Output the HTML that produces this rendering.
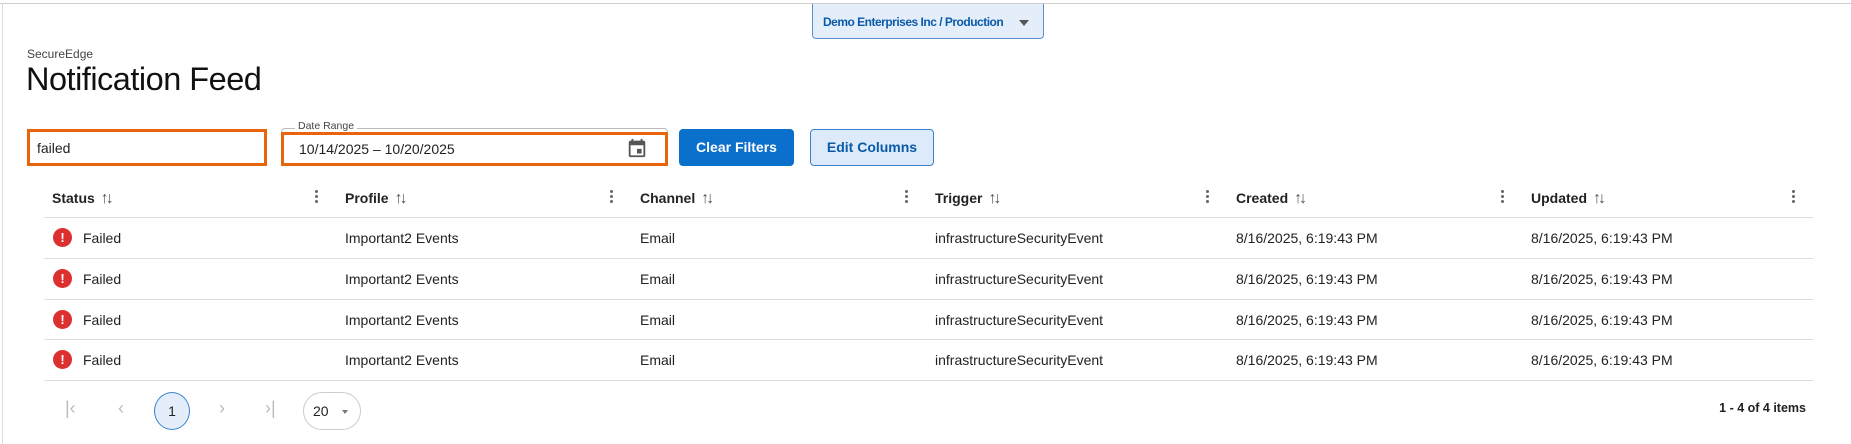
<!DOCTYPE html>
<html><head><meta charset="utf-8"><style>
*{box-sizing:border-box;margin:0;padding:0}
body{width:1851px;height:444px;background:#fff;font-family:"Liberation Sans",sans-serif;color:#222;position:relative;overflow:hidden}
.abs{position:absolute}
.topline{left:0;top:3px;width:1851px;height:1px;background:#ccc}
.leftline{left:2px;top:3px;width:1px;height:441px;background:#ddd}
.tenant{left:812px;top:4px;width:232px;height:35px;background:#e3eefa;border:1px solid #5b8fc9;border-top:none;border-radius:0 0 4px 4px;color:#0b5aa8;font-weight:bold;font-size:12px;padding:11px 0 0 10px;letter-spacing:-0.5px}
.tenant .tri{position:absolute;right:14px;top:16px;width:0;height:0;border-left:5px solid transparent;border-right:5px solid transparent;border-top:6px solid #555}
.brand{left:27px;top:47px;font-size:12px;color:#444}
.title{left:26px;top:61px;font-size:32.5px;color:#111;letter-spacing:-0.5px}
.search{left:27px;top:129px;width:240px;height:37px;border:3px solid #e8650c;font-size:14px;padding:8px 0 0 7px}
.date{left:281px;top:128px;width:387px;height:38px;border:1px solid #bbb;border-radius:4px}
.dateo{left:281px;top:132px;width:387px;height:34px;border:3px solid #e8650c;font-size:14px;padding:6px 0 0 15px}
.dlabel{left:295px;top:120px;font-size:10.5px;color:#444;background:#fff;padding:0 3px}
.btn{height:37px;top:129px;border-radius:4px;font-size:14px;font-weight:bold;text-align:center;line-height:35px}
.clear{left:679px;width:115px;background:#0b6fcc;color:#fff;border:1px solid #0b6fcc}
.edit{left:810px;width:124px;background:#dceafa;color:#0b5aa8;border:1px solid #3d82cf}
.th{top:190px;font-size:14px;font-weight:bold;color:#222}
.sort{font-weight:normal;color:#555;margin-left:6px;letter-spacing:-3px;font-size:16px}
.keb{top:190px;width:4px}
.keb i{display:block;width:3px;height:3px;border-radius:50%;background:#666;margin-bottom:2px}
.hl{left:44px;width:1769px;height:1px;background:#ddd}
.td{font-size:14px;color:#222}
.ico{width:19px;height:19px;border-radius:50%;background:#dc2f2f;color:#fff;font-weight:bold;font-size:13px;text-align:center;line-height:19px}
.pg{top:398px;font-size:18px;color:#bbb}
.cur{left:154px;top:392px;width:36px;height:38px;border-radius:50%;border:1px solid #3d82cf;background:#e3eefa;color:#222;text-align:center;line-height:36px;font-size:14px}
.sel{left:303px;top:392px;width:58px;height:38px;border-radius:19px;border:1px solid #ccc;font-size:14px;padding:10px 0 0 9px}
.sel .tri{position:absolute;right:12px;top:17px;border-left:3px solid transparent;border-right:3px solid transparent;border-top:4px solid #777}
.items{right:45px;top:401px;font-size:12.5px;font-weight:bold;color:#222}
</style></head><body>
<div class="abs topline"></div><div class="abs leftline"></div>
<div class="abs tenant">Demo Enterprises Inc / Production<span class="tri"></span></div>
<div class="abs brand">SecureEdge</div>
<div class="abs title">Notification Feed</div>
<div class="abs search">failed</div>
<div class="abs date"></div>
<div class="abs dateo">10/14/2025 – 10/20/2025</div>
<div class="abs dlabel">Date Range</div>
<svg class="abs" style="left:626px;top:137px" width="22" height="22" viewBox="0 0 24 24"><path fill="#555" d="M19 4h-1V2h-2v2H8V2H6v2H5c-1.1 0-2 .9-2 2v14c0 1.1.9 2 2 2h14c1.1 0 2-.9 2-2V6c0-1.1-.9-2-2-2zm0 16H5V9h14v11zm-7-7h5v5h-5z"/></svg>
<div class="abs btn clear">Clear Filters</div>
<div class="abs btn edit">Edit Columns</div>

<div class="abs th" style="left:52px">Status<span class="sort">↑↓</span></div>
<div class="abs th" style="left:345px">Profile<span class="sort">↑↓</span></div>
<div class="abs th" style="left:640px">Channel<span class="sort">↑↓</span></div>
<div class="abs th" style="left:935px">Trigger<span class="sort">↑↓</span></div>
<div class="abs th" style="left:1236px">Created<span class="sort">↑↓</span></div>
<div class="abs th" style="left:1531px">Updated<span class="sort">↑↓</span></div>
<div class="abs keb" style="left:315px"><i></i><i></i><i></i></div>
<div class="abs keb" style="left:610px"><i></i><i></i><i></i></div>
<div class="abs keb" style="left:905px"><i></i><i></i><i></i></div>
<div class="abs keb" style="left:1206px"><i></i><i></i><i></i></div>
<div class="abs keb" style="left:1501px"><i></i><i></i><i></i></div>
<div class="abs keb" style="left:1792px"><i></i><i></i><i></i></div>

<div class="abs hl" style="top:217px"></div>
<div class="abs hl" style="top:258px"></div>
<div class="abs hl" style="top:299px"></div>
<div class="abs hl" style="top:339px"></div>
<div class="abs hl" style="top:380px"></div>

<div class="abs ico" style="left:53px;top:228px">!</div>
<div class="abs td" style="left:83px;top:230px">Failed</div>
<div class="abs td" style="left:345px;top:230px">Important2 Events</div>
<div class="abs td" style="left:640px;top:230px">Email</div>
<div class="abs td" style="left:935px;top:230px">infrastructureSecurityEvent</div>
<div class="abs td" style="left:1236px;top:230px">8/16/2025, 6:19:43 PM</div>
<div class="abs td" style="left:1531px;top:230px">8/16/2025, 6:19:43 PM</div>

<div class="abs ico" style="left:53px;top:269px">!</div>
<div class="abs td" style="left:83px;top:271px">Failed</div>
<div class="abs td" style="left:345px;top:271px">Important2 Events</div>
<div class="abs td" style="left:640px;top:271px">Email</div>
<div class="abs td" style="left:935px;top:271px">infrastructureSecurityEvent</div>
<div class="abs td" style="left:1236px;top:271px">8/16/2025, 6:19:43 PM</div>
<div class="abs td" style="left:1531px;top:271px">8/16/2025, 6:19:43 PM</div>

<div class="abs ico" style="left:53px;top:310px">!</div>
<div class="abs td" style="left:83px;top:312px">Failed</div>
<div class="abs td" style="left:345px;top:312px">Important2 Events</div>
<div class="abs td" style="left:640px;top:312px">Email</div>
<div class="abs td" style="left:935px;top:312px">infrastructureSecurityEvent</div>
<div class="abs td" style="left:1236px;top:312px">8/16/2025, 6:19:43 PM</div>
<div class="abs td" style="left:1531px;top:312px">8/16/2025, 6:19:43 PM</div>

<div class="abs ico" style="left:53px;top:350px">!</div>
<div class="abs td" style="left:83px;top:352px">Failed</div>
<div class="abs td" style="left:345px;top:352px">Important2 Events</div>
<div class="abs td" style="left:640px;top:352px">Email</div>
<div class="abs td" style="left:935px;top:352px">infrastructureSecurityEvent</div>
<div class="abs td" style="left:1236px;top:352px">8/16/2025, 6:19:43 PM</div>
<div class="abs td" style="left:1531px;top:352px">8/16/2025, 6:19:43 PM</div>

<div class="abs pg" style="left:65px">|‹</div>
<div class="abs pg" style="left:118px">‹</div>
<div class="abs cur">1</div>
<div class="abs pg" style="left:219px">›</div>
<div class="abs pg" style="left:265px">›|</div>
<div class="abs sel">20<span class="abs tri"></span></div>
<div class="abs items">1 - 4 of 4 items</div>
</body></html>
